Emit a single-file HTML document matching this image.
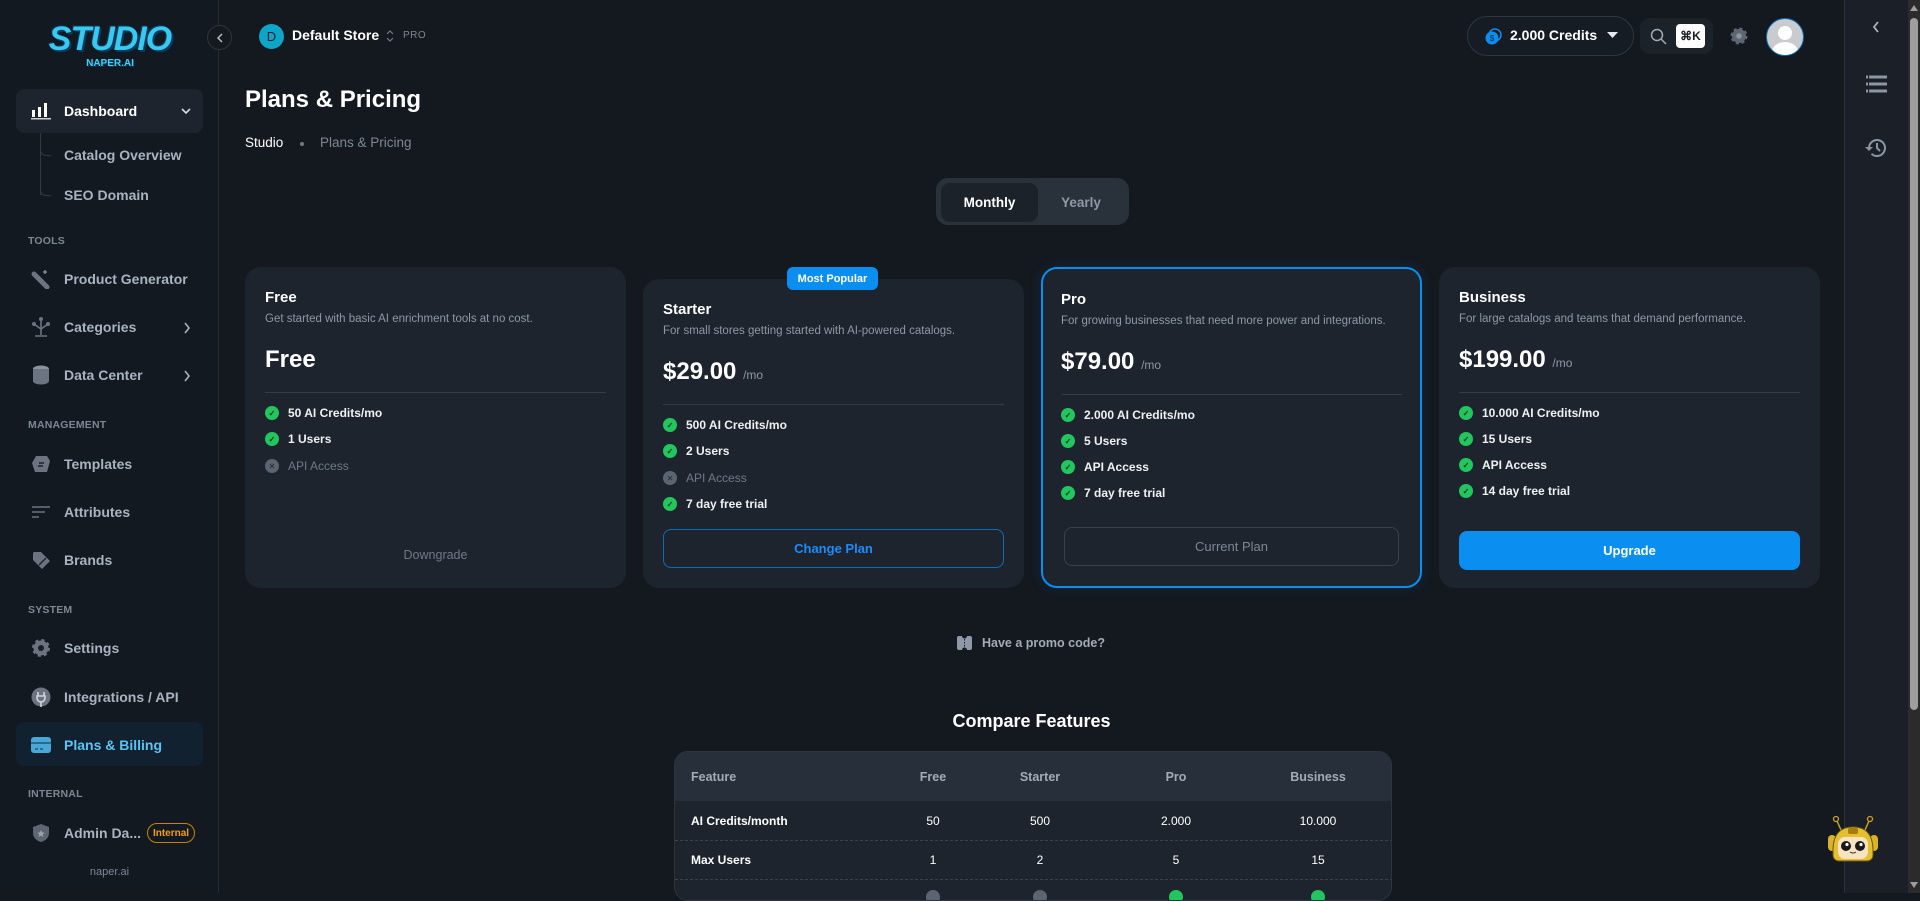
<!DOCTYPE html>
<html><head><meta charset="utf-8"><style>
*{box-sizing:border-box;margin:0;padding:0}
body{width:1920px;height:893px;overflow:hidden;background:#141920;font-family:"Liberation Sans",sans-serif;color:#eef1f4;position:relative}
.a{position:absolute}
.sb{left:0;top:0;width:219px;height:893px;background:#131920;border-right:1px solid #252c35}
.nav{position:absolute;left:30px;font-size:14px;font-weight:bold;color:#a9b3c0;display:flex;align-items:center;height:20px}
.nav .ic{width:22px;height:20px;margin-right:12px;display:flex;align-items:center;justify-content:center}
.sec{position:absolute;left:28px;font-size:10.5px;font-weight:bold;color:#7d8794;letter-spacing:.2px}
.card{position:absolute;background:#1e242e;border-radius:16px}
.ct{position:absolute;left:20px;font-size:15px;font-weight:bold;color:#fff}
.cd{position:absolute;left:20px;font-size:11.5px;color:#8e98a6;white-space:nowrap}
.cp{position:absolute;left:20px;font-size:24px;font-weight:900;color:#fff;white-space:nowrap}
.cp span{font-size:12px;font-weight:normal;color:#8e98a6}
.dv{position:absolute;left:20px;right:20px;height:1px;background:#333c47}
.f{position:absolute;left:20px;font-size:12px;font-weight:bold;color:#eef1f4;display:flex;align-items:center;white-space:nowrap}
.f i{width:14px;height:14px;border-radius:50%;background:#22c55e;margin-right:9px;display:inline-flex;align-items:center;justify-content:center;font-style:normal;font-size:8px;color:#0c3a1e}
.f.x{color:#6f7987;font-weight:normal}
.f.x i{background:#5b6572;color:#1e242e}
.btn{position:absolute;left:20px;right:20px;height:39px;border-radius:8px;display:flex;align-items:center;justify-content:center;font-size:13px;font-weight:bold}
table{border-collapse:collapse}
</style></head><body>
<div class="a sb">
  <div class="a" style="left:47px;top:20px;width:126px;height:54px;text-align:center">
    <div style="font-size:34px;font-weight:900;font-style:italic;color:#38c8f0;letter-spacing:-1px;line-height:38px;text-shadow:0 0 0 #0a2a44,2px 2px 0 #0b3a5c,-1px -1px 0 #0b3a5c">STUDIO</div>
    <div style="font-size:10px;font-weight:900;color:#3fd0f5;line-height:12px;text-shadow:1px 1px 0 #0b3a5c">NAPER.AI</div>
  </div>
  <div class="a" style="left:16px;top:89px;width:187px;height:44px;background:#1e242d;border-radius:8px"></div>
  <div class="nav" style="top:101px;color:#fff"><span class="ic"><svg width="20" height="18"><rect x="1" y="8" width="3" height="7" fill="#fff"/><rect x="7" y="5" width="3" height="10" fill="#fff"/><rect x="13" y="1" width="3" height="14" fill="#fff"/><rect x="0" y="16" width="20" height="1.5" fill="#c9d0d8"/></svg></span>Dashboard</div>
  <svg class="a" style="left:181px;top:107px" width="10" height="8"><path d="M1 2l4 4 4-4" stroke="#d5dbe2" stroke-width="1.6" fill="none"/></svg>
  <div class="a" style="left:40px;top:133px;width:12px;height:62px;border-left:1px solid #313944"></div>
  <div class="a" style="left:40px;top:146px;width:11px;height:10px;border-left:1px solid #313944;border-bottom:1px solid #313944;border-bottom-left-radius:6px"></div>
  <div class="a" style="left:40px;top:186px;width:11px;height:10px;border-left:1px solid #313944;border-bottom:1px solid #313944;border-bottom-left-radius:6px"></div>
  <div class="nav" style="top:145px;left:64px">Catalog Overview</div>
  <div class="nav" style="top:185px;left:64px">SEO Domain</div>
  <div class="sec" style="top:235px">TOOLS</div>
  <div class="nav" style="top:269px"><span class="ic"><svg width="20" height="20"><path d="M3 5l13 13" stroke="#6b7480" stroke-width="5" stroke-linecap="round"/><path d="M14 1v4M12 3h4" stroke="#8a94a0" stroke-width="1.3"/></svg></span>Product Generator</div>
  <div class="nav" style="top:317px"><span class="ic"><svg width="20" height="22"><circle cx="10" cy="3" r="2" fill="#6b7480"/><path d="M10 4v15M4 20h12M3 8l7 5 7-5" stroke="#6b7480" stroke-width="1.6" fill="none"/><circle cx="3" cy="8" r="2" fill="#6b7480"/><circle cx="17" cy="8" r="2" fill="#6b7480"/></svg></span>Categories</div>
  <svg class="a" style="left:183px;top:322px" width="8" height="12"><path d="M2 1l4 5-4 5" stroke="#a9b3c0" stroke-width="1.6" fill="none"/></svg>
  <div class="nav" style="top:365px"><span class="ic"><svg width="18" height="20"><ellipse cx="9" cy="4" rx="8" ry="3.5" fill="#8a939e"/><path d="M1 4v12c0 2 3.5 3.5 8 3.5s8-1.5 8-3.5V4" fill="#6b7480"/></svg></span>Data Center</div>
  <svg class="a" style="left:183px;top:370px" width="8" height="12"><path d="M2 1l4 5-4 5" stroke="#a9b3c0" stroke-width="1.6" fill="none"/></svg>
  <div class="sec" style="top:419px">MANAGEMENT</div>
  <div class="nav" style="top:454px"><span class="ic"><svg width="20" height="20"><path d="M5 2h11l3 5-3 11H4L1 9z" fill="#6b7480"/><path d="M8 9h5M7 12h5" stroke="#1b2028" stroke-width="1.5"/></svg></span>Templates</div>
  <div class="nav" style="top:502px"><span class="ic"><svg width="20" height="14"><path d="M1 2h18M1 7h13M1 12h7" stroke="#6b7480" stroke-width="1.6"/></svg></span>Attributes</div>
  <div class="nav" style="top:550px"><span class="ic"><svg width="20" height="20"><path d="M2 3v7l9 9 8-8-9-9H3z" fill="#6b7480"/><path d="M8 15l7-7" stroke="#1b2028" stroke-width="1.3"/></svg></span>Brands</div>
  <div class="sec" style="top:604px">SYSTEM</div>
  <div class="nav" style="top:638px"><span class="ic"><svg width="20" height="20"><circle cx="10" cy="10" r="7.5" fill="#6b7480" stroke="#6b7480" stroke-width="3" stroke-dasharray="3 2.9"/><circle cx="10" cy="10" r="3" fill="#1b2028"/></svg></span>Settings</div>
  <div class="nav" style="top:687px"><span class="ic"><svg width="20" height="20"><circle cx="10" cy="10" r="9.5" fill="#6b7480"/><path d="M7 5v4M13 5v4M6 9h8v2a4 4 0 0 1-8 0zM10 14v6" stroke="#d0d5dc" stroke-width="1.6" fill="none"/></svg></span>Integrations / API</div>
  <div class="a" style="left:16px;top:722px;width:187px;height:44px;background:#12212f;border-radius:8px"></div>
  <div class="nav" style="top:735px;color:#5cc4f5"><span class="ic"><svg width="20" height="16"><rect x="0" y="0" width="20" height="16" rx="3" fill="#4aa8d8"/><rect x="0" y="5" width="20" height="2" fill="#2a6a8c"/><path d="M4 12h3M9 12h3" stroke="#1a4a66" stroke-width="1.2"/></svg></span>Plans &amp; Billing</div>
  <div class="sec" style="top:788px">INTERNAL</div>
  <div class="nav" style="top:823px"><span class="ic"><svg width="18" height="20"><path d="M9 1l8 3v6c0 5-4 8-8 9-4-1-8-4-8-9V4z" fill="#5d6672"/><path d="M9 7l1.2 2.4 2.6.3-2 1.7.6 2.6L9 12.6 6.6 14l.6-2.6-2-1.7 2.6-.3z" fill="#9aa2ac"/></svg></span>Admin Da...</div>
  <div class="a" style="left:147px;top:823px;width:48px;height:20px;border:1px solid #c98300;border-radius:10px;font-size:10px;font-weight:bold;color:#f59e0b;display:flex;align-items:center;justify-content:center">Internal</div>
  <div class="a" style="left:0;width:219px;top:866px;text-align:center;font-size:11px;color:#7d8794">naper.ai</div>
</div>
<div class="a" style="left:207px;top:25px;width:25px;height:25px;border-radius:50%;border:1px solid #2c343e;background:#141920;display:flex;align-items:center;justify-content:center"><svg width="8" height="10"><path d="M6 1L2 5l4 4" stroke="#b4bcc6" stroke-width="1.5" fill="none"/></svg></div>
<div class="a" style="left:259px;top:24px;width:25px;height:25px;border-radius:50%;background:#0ea5c9;color:#0b2530;font-size:13px;display:flex;align-items:center;justify-content:center">D</div>
<div class="a" style="left:292px;top:27px;font-size:14px;font-weight:bold;color:#fff">Default Store</div>
<svg class="a" style="left:385px;top:28px" width="10" height="16"><path d="M2 6l3-3 3 3M2 10l3 3 3-3" stroke="#6f7987" stroke-width="1.2" fill="none"/></svg>
<div class="a" style="left:403px;top:30px;font-size:10px;color:#7d8794;letter-spacing:.5px">PRO</div>

<div class="a" style="left:1467px;top:16px;width:167px;height:40px;border:1px solid #2e3640;border-radius:20px;background:#161c23"></div>
<svg class="a" style="left:1484px;top:28px" width="18" height="18"><circle cx="11" cy="7" r="6" fill="none" stroke="#0a8ff0" stroke-width="1.5"/><circle cx="8" cy="10" r="6.5" fill="#0a8ff0"/><text x="8" y="13" font-size="8" text-anchor="middle" fill="#0b2a44" font-family="Liberation Sans">$</text></svg>
<div class="a" style="left:1510px;top:27px;font-size:14px;font-weight:bold;color:#fff">2.000 Credits</div>
<svg class="a" style="left:1607px;top:32px" width="11" height="7"><path d="M0 0h11L5.5 6z" fill="#e4e8ec"/></svg>
<div class="a" style="left:1640px;top:18px;width:73px;height:36px;border-radius:10px;background:#1c222a"></div>
<svg class="a" style="left:1650px;top:28px" width="17" height="17"><circle cx="7" cy="7" r="5.5" stroke="#a2abb6" stroke-width="1.5" fill="none"/><path d="M11 11l5 5" stroke="#a2abb6" stroke-width="1.5"/></svg>
<div class="a" style="left:1676px;top:24px;width:29px;height:24px;border-radius:4px;background:#fff;color:#1a1f26;font-size:12px;font-weight:bold;display:flex;align-items:center;justify-content:center">⌘K</div>
<svg class="a" style="left:1729px;top:26px" width="20" height="20"><circle cx="10" cy="10" r="7" fill="#5d6672" stroke="#5d6672" stroke-width="3" stroke-dasharray="3 2.5"/><circle cx="10" cy="10" r="2.8" fill="#8b95a1"/></svg>
<div class="a" style="left:1766px;top:18px;width:38px;height:38px;border-radius:50%;border:1px solid #0a6fb8;background:#c9cbce;overflow:hidden">
  <div class="a" style="left:11px;top:7px;width:14px;height:14px;border-radius:50%;background:#fff"></div>
  <div class="a" style="left:5px;top:23px;width:26px;height:20px;border-radius:50%;background:#fff"></div>
</div>

<div class="a" style="left:1844px;top:0;width:64px;height:893px;background:#1b2028;border-left:1px solid #2c333d"></div>
<svg class="a" style="left:1871px;top:20px" width="10" height="14"><path d="M7 2L3 7l4 5" stroke="#aab3be" stroke-width="1.8" fill="none"/></svg>
<svg class="a" style="left:1866px;top:75px" width="21" height="18"><path d="M0 2h21M0 9h21M0 16h21" stroke="#8c96a3" stroke-width="3"/><path d="M2 2h1M2 9h1M2 16h1" stroke="#1b2028" stroke-width="3"/></svg>
<svg class="a" style="left:1865px;top:138px" width="22" height="20"><path d="M4 10a8 8 0 1 1 2.5 5.8" stroke="#8c96a3" stroke-width="2" fill="none"/><path d="M0 9l4 4 4-4" fill="#8c96a3"/><path d="M12 5v5l3 3" stroke="#8c96a3" stroke-width="2" fill="none"/></svg>
<div class="a" style="left:1908px;top:0;width:12px;height:893px;background:#2b2b2b"></div>
<div class="a" style="left:1910px;top:18px;width:8px;height:692px;background:#9e9e9e;border-radius:4px"></div>
<svg class="a" style="left:1910px;top:5px" width="8" height="6"><path d="M0 6L4 0l4 6z" fill="#9e9e9e"/></svg>
<svg class="a" style="left:1910px;top:882px" width="8" height="6"><path d="M0 0l4 6 4-6z" fill="#9e9e9e"/></svg>
<svg class="a" style="left:1825px;top:815px" width="62" height="56"><circle cx="11" cy="4" r="2.5" fill="none" stroke="#c9a21e" stroke-width="1.3"/><circle cx="45" cy="4" r="2.5" fill="none" stroke="#c9a21e" stroke-width="1.3"/><path d="M12 6l4 9M44 6l-4 9" stroke="#c9a21e" stroke-width="1.5"/><rect x="3" y="20" width="8" height="16" rx="4" fill="#d9b22a"/><rect x="45" y="20" width="8" height="16" rx="4" fill="#d9b22a"/><path d="M8 36c0-18 8-24 20-24s20 6 20 24v4c0 4-3 6-6 6H14c-3 0-6-2-6-6z" fill="#e5c02e" stroke="#6b5210" stroke-width="1"/><rect x="13" y="22" width="30" height="22" rx="7" fill="#f6e3c2"/><rect x="23" y="13" width="10" height="6" rx="2" fill="#a57c10"/><circle cx="21" cy="31" r="5" fill="#1a1a1a"/><circle cx="35" cy="31" r="5" fill="#1a1a1a"/><circle cx="22" cy="29.5" r="1.6" fill="#fff"/><circle cx="36" cy="29.5" r="1.6" fill="#fff"/><path d="M25 37q3 2 6 0" stroke="#333" fill="none"/></svg>

<div class="a" style="left:245px;top:86px;font-size:24px;font-weight:900;color:#fff">Plans &amp; Pricing</div>
<div class="a" style="left:245px;top:135px;font-size:13.5px;color:#fff">Studio</div>
<div class="a" style="left:300px;top:142px;width:4px;height:4px;border-radius:50%;background:#6f7987"></div>
<div class="a" style="left:320px;top:135px;font-size:13.5px;color:#7d8794">Plans &amp; Pricing</div>

<div class="a" style="left:936px;top:178px;width:193px;height:47px;border-radius:12px;background:#29313b"></div>
<div class="a" style="left:941px;top:183px;width:97px;height:39px;border-radius:9px;background:#1c222a;font-size:13.5px;font-weight:bold;color:#fff;display:flex;align-items:center;justify-content:center">Monthly</div>
<div class="a" style="left:1038px;top:183px;width:86px;height:39px;font-size:13.5px;font-weight:bold;color:#8e98a6;display:flex;align-items:center;justify-content:center">Yearly</div>

<div class="card" style="left:245px;top:267px;width:381px;height:321px">
  <div class="ct" style="top:22px">Free</div>
  <div class="cd" style="top:46px">Get started with basic AI enrichment tools at no cost.</div>
  <div class="cp" style="top:79px">Free</div>
  <div class="dv" style="top:125px"></div>
  <div class="f" style="top:139px"><i>✓</i>50 AI Credits/mo</div>
  <div class="f" style="top:165px"><i>✓</i>1 Users</div>
  <div class="f x" style="top:192px"><i>✕</i>API Access</div>
  <div class="btn" style="top:268px;color:#6f7987;font-weight:normal;font-size:12.5px">Downgrade</div>
</div>
<div class="card" style="left:643px;top:279px;width:381px;height:309px">
  <div class="ct" style="top:22px">Starter</div>
  <div class="cd" style="top:46px">For small stores getting started with AI-powered catalogs.</div>
  <div class="cp" style="top:79px">$29.00 <span>/mo</span></div>
  <div class="dv" style="top:125px"></div>
  <div class="f" style="top:139px"><i>✓</i>500 AI Credits/mo</div>
  <div class="f" style="top:165px"><i>✓</i>2 Users</div>
  <div class="f x" style="top:192px"><i>✕</i>API Access</div>
  <div class="f" style="top:218px"><i>✓</i>7 day free trial</div>
  <div class="btn" style="top:250px;border:1px solid #0d6cb8;color:#1a8cff">Change Plan</div>
</div>
<div class="a" style="left:787px;top:267px;width:91px;height:23px;border-radius:6px;background:#0a8ff0;font-size:11px;font-weight:bold;color:#fff;display:flex;align-items:center;justify-content:center">Most Popular</div>
<div class="card" style="left:1041px;top:267px;width:381px;height:321px;border:2px solid #0a8ff0;box-shadow:0 0 14px rgba(10,143,240,.12)">
  <div class="ct" style="top:22px;left:18px">Pro</div>
  <div class="cd" style="top:46px;left:18px">For growing businesses that need more power and integrations.</div>
  <div class="cp" style="top:79px;left:18px">$79.00 <span>/mo</span></div>
  <div class="dv" style="top:125px;left:18px;right:18px"></div>
  <div class="f" style="top:139px;left:18px"><i>✓</i>2.000 AI Credits/mo</div>
  <div class="f" style="top:165px;left:18px"><i>✓</i>5 Users</div>
  <div class="f" style="top:191px;left:18px"><i>✓</i>API Access</div>
  <div class="f" style="top:217px;left:18px"><i>✓</i>7 day free trial</div>
  <div class="btn" style="top:258px;left:21px;right:21px;border:1px solid #38414c;color:#7d8794;font-weight:normal">Current Plan</div>
</div>
<div class="card" style="left:1439px;top:267px;width:381px;height:321px">
  <div class="ct" style="top:22px">Business</div>
  <div class="cd" style="top:46px">For large catalogs and teams that demand performance.</div>
  <div class="cp" style="top:79px">$199.00 <span>/mo</span></div>
  <div class="dv" style="top:125px"></div>
  <div class="f" style="top:139px"><i>✓</i>10.000 AI Credits/mo</div>
  <div class="f" style="top:165px"><i>✓</i>15 Users</div>
  <div class="f" style="top:191px"><i>✓</i>API Access</div>
  <div class="f" style="top:217px"><i>✓</i>14 day free trial</div>
  <div class="btn" style="top:264px;background:#0a8ff0;color:#fff">Upgrade</div>
</div>

<svg class="a" style="left:957px;top:636px" width="15" height="14"><rect x="0" y="0" width="15" height="14" rx="2" fill="#8e98a6"/><circle cx="7.5" cy="0" r="2.5" fill="#141920"/><circle cx="7.5" cy="14" r="2.5" fill="#141920"/><path d="M7.5 3v8" stroke="#141920" stroke-dasharray="1.5 1.5"/></svg>
<div class="a" style="left:982px;top:636px;font-size:12.5px;font-weight:bold;color:#a2abb6">Have a promo code?</div>
<div class="a" style="left:0;width:2063px;top:711px;text-align:center;font-size:18px;font-weight:bold;color:#fff">Compare Features</div>
<div class="a" style="left:674px;top:751px;width:718px;height:150px;border-radius:14px;background:#1e242e;overflow:hidden;border:1px solid #2c343e">
  <div class="a" style="left:0;top:0;width:718px;height:49px;background:#27303a"></div>
  <div class="a" style="left:0;top:88px;width:718px;border-top:1px dashed #39424d"></div>
  <div class="a" style="left:0;top:127px;width:718px;border-top:1px dashed #39424d"></div>
  <div class="a" style="left:16px;top:18px;font-size:12.5px;font-weight:bold;color:#a2abb6">Feature</div>
  <div class="a" style="left:208px;width:100px;text-align:center;top:18px;font-size:12.5px;font-weight:bold;color:#a2abb6">Free</div>
  <div class="a" style="left:315px;width:100px;text-align:center;top:18px;font-size:12.5px;font-weight:bold;color:#a2abb6">Starter</div>
  <div class="a" style="left:451px;width:100px;text-align:center;top:18px;font-size:12.5px;font-weight:bold;color:#a2abb6">Pro</div>
  <div class="a" style="left:593px;width:100px;text-align:center;top:18px;font-size:12.5px;font-weight:bold;color:#a2abb6">Business</div>
  <div class="a" style="left:16px;top:62px;font-size:12px;font-weight:bold;color:#fff">AI Credits/month</div>
  <div class="a" style="left:208px;width:100px;text-align:center;top:62px;font-size:12px;color:#fff">50</div>
  <div class="a" style="left:315px;width:100px;text-align:center;top:62px;font-size:12px;color:#fff">500</div>
  <div class="a" style="left:451px;width:100px;text-align:center;top:62px;font-size:12px;color:#fff">2.000</div>
  <div class="a" style="left:593px;width:100px;text-align:center;top:62px;font-size:12px;color:#fff">10.000</div>
  <div class="a" style="left:16px;top:101px;font-size:12px;font-weight:bold;color:#fff">Max Users</div>
  <div class="a" style="left:208px;width:100px;text-align:center;top:101px;font-size:12px;color:#fff">1</div>
  <div class="a" style="left:315px;width:100px;text-align:center;top:101px;font-size:12px;color:#fff">2</div>
  <div class="a" style="left:451px;width:100px;text-align:center;top:101px;font-size:12px;color:#fff">5</div>
  <div class="a" style="left:593px;width:100px;text-align:center;top:101px;font-size:12px;color:#fff">15</div>
  <div class="a" style="left:251px;top:138px;width:14px;height:14px;border-radius:50%;background:#5b6572"></div>
  <div class="a" style="left:358px;top:138px;width:14px;height:14px;border-radius:50%;background:#5b6572"></div>
  <div class="a" style="left:494px;top:138px;width:14px;height:14px;border-radius:50%;background:#22c55e"></div>
  <div class="a" style="left:636px;top:138px;width:14px;height:14px;border-radius:50%;background:#22c55e"></div>
</div>
</body></html>
